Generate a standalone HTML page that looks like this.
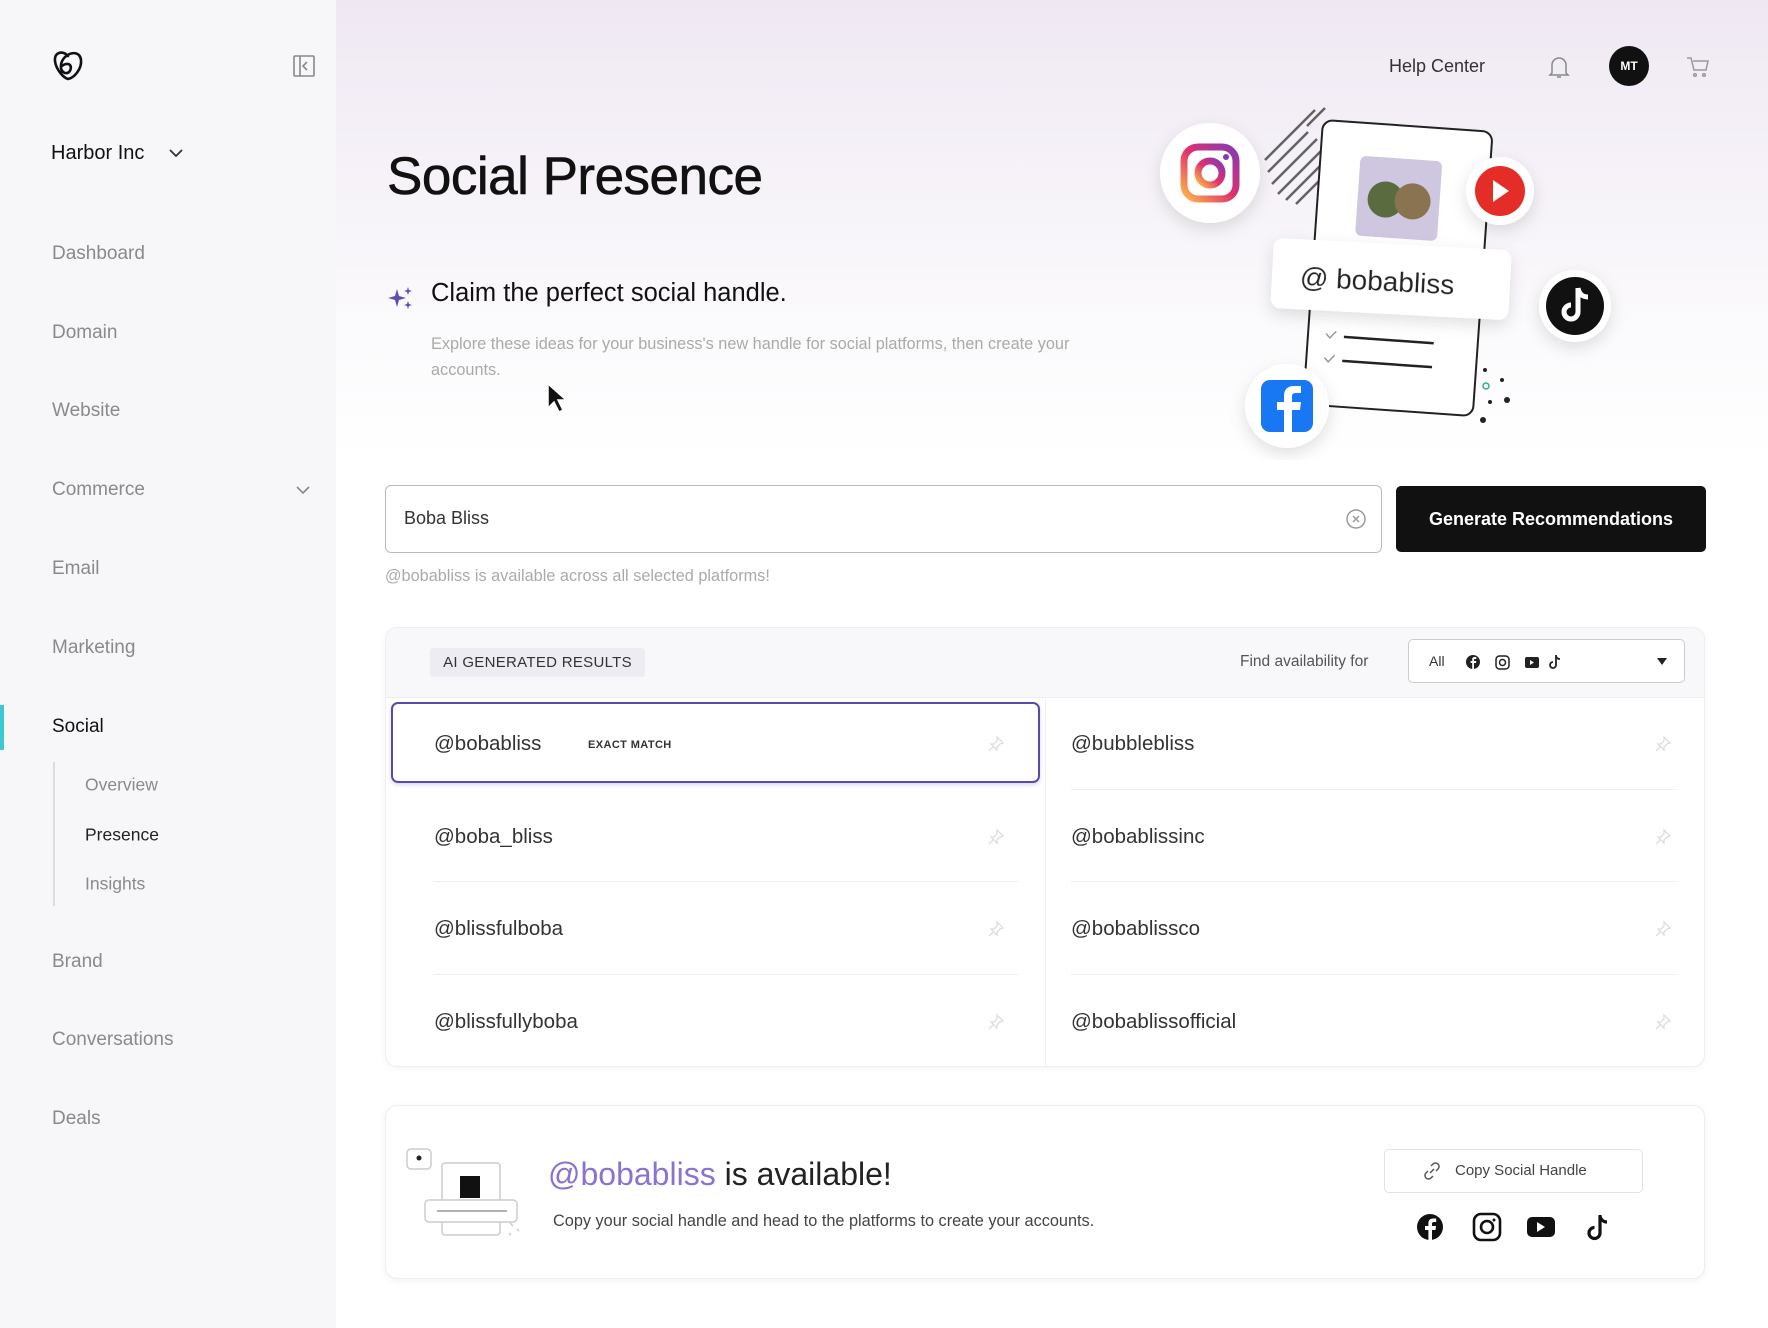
<!DOCTYPE html>
<html><head><meta charset="utf-8"><style>
*{box-sizing:border-box;margin:0;padding:0}
body{width:1768px;height:1328px;overflow:hidden;font-family:"Liberation Sans",sans-serif;background:#fff;position:relative;color:#111}
.abs{position:absolute}
#side{left:0;top:0;width:336px;height:1328px;background:#f7f7f9}
#main{left:336px;top:0;width:1432px;height:1328px;background:linear-gradient(180deg,#efe8f3 0px,#f6f2f8 180px,#fbfafc 330px,#fff 460px)}
.nav{position:absolute;left:52px;font-size:19px;color:#8a8a8e;transform:translateY(-50%)}
.sub{left:85px;font-size:17.5px;color:#8a8a8e}
.row{position:absolute;font-size:20.5px;color:#333;transform:translateY(-50%)}
.pin{position:absolute;width:18px;height:18px;transform:translateY(-50%)}
.hr{position:absolute;height:1px;background:#eee}
</style></head><body>
<div id="side" class="abs"></div>
<div id="main" class="abs"></div>

<svg class="abs" style="left:50px;top:47px" width="36" height="36" viewBox="0 0 36 36" fill="none" stroke="#111" stroke-width="2.6" stroke-linecap="round"><path d="M18 9C13 3 4 5 5 14c1 9 9 17 13 18 6-1 14-10 13-19C30 5 22 4 15 10 10 15 9 24 15 26c5 1 7-5 5-8-2-2-6-1-8 1"/></svg>
<svg class="abs" style="left:292px;top:54px" width="24" height="24" viewBox="0 0 24 24" fill="none" stroke="#888" stroke-width="1.6"><rect x="2" y="2" width="20" height="20" rx="1"/><path d="M8 2v20M15 8l-4 4 4 4"/></svg>

<div class="abs" style="left:51px;top:142px;font-size:20px;color:#111">Harbor Inc</div>
<svg class="abs" style="left:167px;top:146px" width="18" height="14" viewBox="0 0 18 14" fill="none" stroke="#333" stroke-width="1.8"><path d="M3 4l6 6 6-6"/></svg>

<div class="nav" style="top:254px">Dashboard</div>
<div class="nav" style="top:333px">Domain</div>
<div class="nav" style="top:411px">Website</div>
<div class="nav" style="top:490px">Commerce</div>
<svg class="abs" style="left:294px;top:483px" width="18" height="14" viewBox="0 0 18 14" fill="none" stroke="#888" stroke-width="1.6"><path d="M3 4l6 6 6-6"/></svg>
<div class="nav" style="top:569px">Email</div>
<div class="nav" style="top:648px">Marketing</div>
<div class="abs" style="left:0;top:705px;width:4px;height:45px;background:#3cc8d4"></div>
<div class="nav" style="top:727px;color:#111">Social</div>
<div class="abs" style="left:53px;top:762px;width:2px;height:144px;background:#ddd"></div>
<div class="nav sub" style="top:785px">Overview</div>
<div class="nav sub" style="top:835px;color:#222">Presence</div>
<div class="nav sub" style="top:884px">Insights</div>
<div class="nav" style="top:962px">Brand</div>
<div class="nav" style="top:1040px">Conversations</div>
<div class="nav" style="top:1119px">Deals</div>

<div class="abs" style="left:1389px;top:56px;font-size:18px;color:#333">Help Center</div>
<svg class="abs" style="left:1547px;top:54px" width="24" height="26" viewBox="0 0 24 26" fill="none" stroke="#888" stroke-width="1.5"><path d="M5 19V11a7 7 0 0114 0v8l2 2H3zM10 23h4"/></svg>
<div class="abs" style="left:1609px;top:46px;width:40px;height:40px;border-radius:50%;background:#111;color:#fff;font-size:12px;font-weight:bold;text-align:center;line-height:40px">MT</div>
<svg class="abs" style="left:1686px;top:56px" width="24" height="22" viewBox="0 0 24 22" fill="none" stroke="#999" stroke-width="1.5"><path d="M1 2h4l3 12h12l2-9H7"/><circle cx="9" cy="19" r="1.3"/><circle cx="18" cy="19" r="1.3"/></svg>

<div class="abs" style="left:387px;top:146px;font-size:53px;color:#111;letter-spacing:-0.5px;-webkit-text-stroke:0.6px #111">Social Presence</div>

<svg class="abs" style="left:388px;top:285px" width="26" height="26" viewBox="0 0 26 26" fill="#5b4fb3"><path d="M9 4l2 7 7 2-7 2-2 7-2-7-7-2 7-2z"/><path d="M20 2l1 3 3 1-3 1-1 3-1-3-3-1 3-1z"/><path d="M20 16l1 3 3 1-3 1-1 3-1-3-3-1 3-1z"/></svg>
<div class="abs" style="left:431px;top:279px;font-size:25.5px;color:#111">Claim the perfect social handle.</div>
<div class="abs" style="left:431px;top:331px;width:655px;font-size:16.3px;line-height:26px;color:#aaa">Explore these ideas for your business's new handle for social platforms, then create your accounts.</div>
<svg class="abs" style="left:546px;top:382px" width="22" height="32" viewBox="0 0 22 32"><path d="M2 2v24l6-6 5 10 4-2-5-10h8z" fill="#111" stroke="#fff" stroke-width="1.5"/></svg>

<svg class="abs" style="left:1140px;top:80px" width="520" height="380" viewBox="0 0 520 380">
<defs>
<filter id="sh" x="-50%" y="-50%" width="200%" height="200%"><feDropShadow dx="0" dy="6" stdDeviation="8" flood-color="#000" flood-opacity="0.12"/></filter>
<linearGradient id="ig" x1="0" y1="1" x2="1" y2="0"><stop offset="0" stop-color="#fdb74a"/><stop offset="0.5" stop-color="#e1306c"/><stop offset="1" stop-color="#833ab4"/></linearGradient>
</defs>
<g stroke="#333" stroke-width="2.5" opacity="0.75">
<path d="M125 80l30-30M128 92l40-40M132 104l45-45M138 114l48-48M146 120l42-42M156 124l30-30M185 28l-18 18M175 30l-40 40"/>
</g>
<g transform="rotate(4 250 200)">
<rect x="172" y="45" width="170" height="285" rx="10" fill="#fff" stroke="#222" stroke-width="2"/>
<rect x="212" y="78" width="82" height="80" rx="6" fill="#cfc6df"/>
<circle cx="240" cy="120" r="18" fill="#5a6b40"/><circle cx="267" cy="120" r="18" fill="#8a7350"/>
<path d="M208 260h90M208 284h90" stroke="#222" stroke-width="2.5"/>
<path d="M190 258l4 4 6-7M190 282l4 4 6-7" stroke="#999" stroke-width="1.5" fill="none"/>
</g>
<g transform="rotate(3 250 200)" filter="url(#sh)">
<rect x="132" y="164" width="238" height="70" rx="10" fill="#fff"/>
<text x="160" y="211" font-family="Liberation Sans" font-size="28" fill="#222">@ bobabliss</text>
</g>
<circle cx="70" cy="93" r="50" fill="#fff" filter="url(#sh)"/>
<rect x="44" y="67" width="52" height="52" rx="14" fill="none" stroke="url(#ig)" stroke-width="7"/>
<circle cx="70" cy="93" r="12" fill="none" stroke="url(#ig)" stroke-width="7"/>
<circle cx="86" cy="77" r="3" fill="#833ab4"/>
<circle cx="360" cy="111" r="34" fill="#fff" filter="url(#sh)"/>
<circle cx="360" cy="111" r="25" fill="#e52d27"/><path d="M353 100l16 11-16 11z" fill="#fff"/>
<circle cx="435" cy="226" r="36" fill="#fff" filter="url(#sh)"/>
<circle cx="435" cy="226" r="29" fill="#111"/>
<path d="M438 208v24a7 7 0 11-7-7M438 208c1 6 5 9 10 9" stroke="#fff" stroke-width="5" fill="none"/>
<circle cx="147" cy="326" r="42" fill="#fff" filter="url(#sh)"/>
<rect x="121" y="300" width="52" height="52" rx="9" fill="#1877f2"/>
<path d="M152 352v-22h8l1-8h-9v-5c0-3 1-4 4-4h5v-7h-7c-7 0-10 4-10 10v6h-7v8h7v22z" fill="#fff"/>
<g fill="#222"><circle cx="345" cy="290" r="2"/><circle cx="362" cy="300" r="2"/><circle cx="350" cy="322" r="2"/><circle cx="367" cy="320" r="3"/><circle cx="343" cy="340" r="3"/></g>
<circle cx="346" cy="306" r="3" fill="none" stroke="#3a9" stroke-width="1.5"/>
</svg>

<div class="abs" style="left:385px;top:485px;width:997px;height:68px;background:#fff;border:1.5px solid #bbb;border-radius:6px"></div>
<div class="abs" style="left:404px;top:508px;font-size:18px;color:#333">Boba Bliss</div>
<svg class="abs" style="left:1345px;top:508px" width="22" height="22" viewBox="0 0 22 22" fill="none" stroke="#999" stroke-width="1.5"><circle cx="11" cy="11" r="9"/><path d="M8 8l6 6M14 8l-6 6"/></svg>
<div class="abs" style="left:1396px;top:486px;width:310px;height:66px;background:#111;border-radius:5px;color:#fff;font-size:18px;font-weight:bold;text-align:center;line-height:66px">Generate Recommendations</div>
<div class="abs" style="left:385px;top:567px;font-size:16.3px;color:#aaa">@bobabliss is available across all selected platforms!</div>

<div class="abs" style="left:385px;top:627px;width:1320px;height:440px;background:#fff;border:1px solid #eee;border-radius:12px;box-shadow:0 2px 8px rgba(0,0,0,.04);overflow:hidden">
<div style="position:absolute;left:0;top:0;width:100%;height:70px;background:#f8f8fa;border-bottom:1px solid #eee"></div>
</div>
<div class="abs" style="left:430px;top:648px;width:215px;height:29px;background:#ececf2;border-radius:3px;font-size:15px;color:#333;line-height:29px;text-align:center;letter-spacing:.3px">AI GENERATED RESULTS</div>
<div class="abs" style="left:1240px;top:653px;font-size:15.5px;color:#555">Find availability for</div>
<div class="abs" style="left:1408px;top:639px;width:277px;height:44px;background:#fff;border:1.5px solid #ccc;border-radius:5px"></div>
<div class="abs" style="left:1429px;top:653px;font-size:14px;color:#333">All</div>
<svg class="abs" style="left:1465px;top:654px" width="100" height="16" viewBox="0 0 100 16"><circle cx="8" cy="8" r="7" fill="#222"/><path d="M9 15V9h2l.3-2H9V6c0-.7.3-1 1-1h1.3V3H9.6C8 3 7.2 4 7.2 5.4V7H5.6v2h1.6v6z" fill="#fff"/><rect x="31" y="2" width="13" height="13" rx="3.5" fill="none" stroke="#222" stroke-width="1.5"/><circle cx="37.5" cy="8.5" r="3" fill="none" stroke="#222" stroke-width="1.5"/><rect x="60" y="3" width="14" height="11" rx="2" fill="#222"/><path d="M65 6l4 2.5-4 2.5z" fill="#fff"/><path d="M91 1v10a3 3 0 11-3-3M91 1c0 3 2 4 4 4" stroke="#222" stroke-width="1.8" fill="none"/></svg>
<svg class="abs" style="left:1656px;top:656px" width="12" height="10" viewBox="0 0 12 10"><path d="M1 2h10l-5 7z" fill="#222"/></svg>

<div class="abs" style="left:1045px;top:698px;width:1px;height:369px;background:#f0f0f0"></div>
<div class="abs" style="left:391px;top:702px;width:649px;height:81px;border:2.5px solid #5b4aa8;border-radius:7px;box-shadow:0 2px 4px rgba(80,60,160,.2)"></div>
<div class="row" style="left:434px;top:744px">@bobabliss</div>
<div class="abs" style="left:588px;top:739px;font-size:11px;font-weight:bold;color:#333;letter-spacing:.4px">EXACT MATCH</div>
<div class="row" style="left:434px;top:837px">@boba_bliss</div>
<div class="row" style="left:434px;top:929px">@blissfulboba</div>
<div class="row" style="left:434px;top:1022px">@blissfullyboba</div>
<div class="row" style="left:1071px;top:744px">@bubblebliss</div>
<div class="row" style="left:1071px;top:837px">@bobablissinc</div>
<div class="row" style="left:1071px;top:929px">@bobablissco</div>
<div class="row" style="left:1071px;top:1022px">@bobablissofficial</div>
<div class="hr" style="left:434px;top:881px;width:584px"></div>
<div class="hr" style="left:434px;top:974px;width:584px"></div>
<div class="hr" style="left:1071px;top:789px;width:606px"></div>
<div class="hr" style="left:1071px;top:881px;width:606px"></div>
<div class="hr" style="left:1071px;top:974px;width:606px"></div>
<svg width="0" height="0" style="position:absolute"><symbol id="pn" viewBox="0 0 18 18"><path d="M10 2l6 6-3 1-3 3 0 3-6-6 3 0 3-3zM6 12l-4 4" fill="none" stroke="#ddd" stroke-width="1.3"/></symbol></svg>
<svg class="pin" style="left:987px;top:744px"><use href="#pn"/></svg>
<svg class="pin" style="left:987px;top:837px"><use href="#pn"/></svg>
<svg class="pin" style="left:987px;top:929px"><use href="#pn"/></svg>
<svg class="pin" style="left:987px;top:1022px"><use href="#pn"/></svg>
<svg class="pin" style="left:1654px;top:744px"><use href="#pn"/></svg>
<svg class="pin" style="left:1654px;top:837px"><use href="#pn"/></svg>
<svg class="pin" style="left:1654px;top:929px"><use href="#pn"/></svg>
<svg class="pin" style="left:1654px;top:1022px"><use href="#pn"/></svg>

<div class="abs" style="left:385px;top:1105px;width:1320px;height:174px;background:#fff;border:1px solid #eee;border-radius:12px;box-shadow:0 2px 8px rgba(0,0,0,.05)"></div>
<svg class="abs" style="left:405px;top:1145px" width="125" height="95" viewBox="0 0 125 95" fill="none" stroke="#ccc" stroke-width="1.5"><rect x="2" y="4" width="24" height="20" rx="4" fill="#fff"/><circle cx="14" cy="13" r="2.5" fill="#222" stroke="none"/><rect x="37" y="18" width="58" height="72" rx="3" fill="#fff"/><rect x="55" y="31" width="20" height="22" fill="#111" stroke="none"/><rect x="20" y="55" width="92" height="22" rx="4" fill="#fff"/><path d="M32 66h70" stroke="#999"/><path d="M105 78l3 3M112 84l2 2M104 88l2 2"/></svg>
<div class="abs" style="left:548px;top:1156px;font-size:32px;color:#222"><span style="color:#8b72d1">@bobabliss</span> is available!</div>
<div class="abs" style="left:553px;top:1212px;font-size:16.3px;color:#444">Copy your social handle and head to the platforms to create your accounts.</div>
<div class="abs" style="left:1384px;top:1149px;width:259px;height:44px;border:1px solid #e3e3e3;border-radius:5px;background:#fff;font-size:15px;color:#444;line-height:42px;padding-left:70px">Copy Social Handle</div>
<svg class="abs" style="left:1422px;top:1161px" width="20" height="20" viewBox="0 0 20 20" fill="none" stroke="#555" stroke-width="1.5"><path d="M8 12l4-4M9 5l2-2a3.5 3.5 0 015 5l-2 2M11 15l-2 2a3.5 3.5 0 01-5-5l2-2"/></svg>
<svg class="abs" style="left:1416px;top:1212px" width="200" height="32" viewBox="0 0 200 32"><circle cx="14" cy="15" r="13" fill="#111"/><path d="M16 28V18h3.5l.5-4h-4v-2c0-1.2.4-2 2-2h2.2V6.5H17c-3 0-4.6 1.8-4.6 4.8V14H9v4h3.4v10z" fill="#fff"/><rect x="58" y="2" width="26" height="26" rx="7" fill="none" stroke="#111" stroke-width="2.6"/><circle cx="71" cy="15" r="6" fill="none" stroke="#111" stroke-width="2.6"/><circle cx="78" cy="8" r="1.5" fill="#111"/><rect x="111" y="5" width="28" height="20" rx="5" fill="#111"/><path d="M121 10l8 5-8 5z" fill="#fff"/><path d="M184 3v18a5.5 5.5 0 11-5.5-5.5M184 3c0 4 3 7 7 7" stroke="#111" stroke-width="3.2" fill="none"/></svg>
</body></html>
